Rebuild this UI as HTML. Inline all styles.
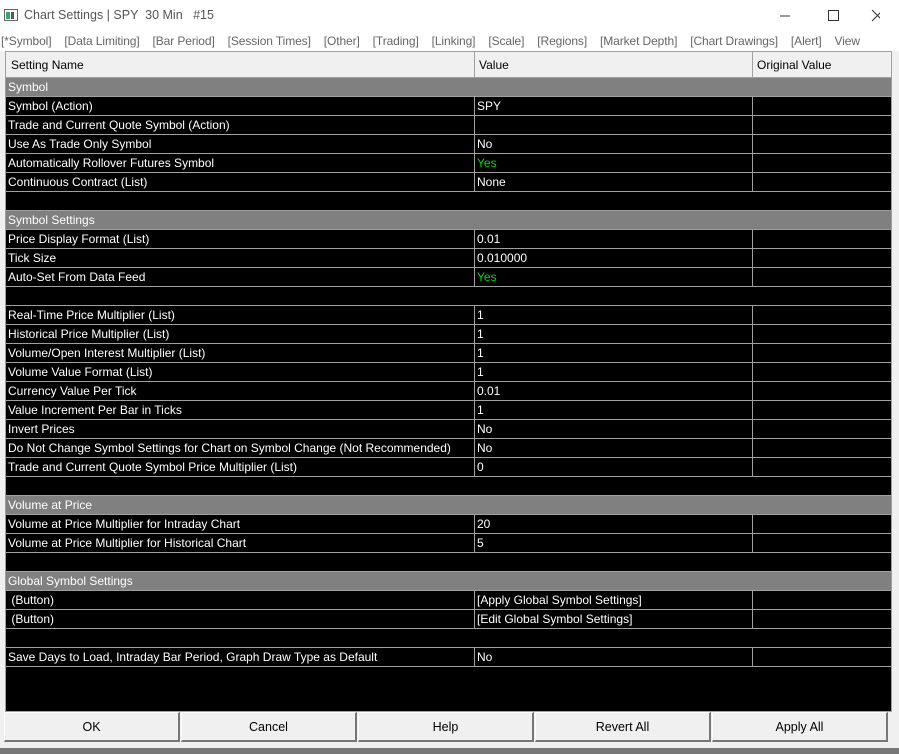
<!DOCTYPE html><html><head><style>
*{margin:0;padding:0;box-sizing:border-box}
body{width:899px;height:754px;overflow:hidden;background:#f0f0f0;font-family:"Liberation Sans",sans-serif;font-size:12px;position:relative}
.title{position:absolute;left:0;top:0;width:899px;height:31px;background:#fff;}
.title span{position:absolute;left:24px;top:8px;font-size:12.5px;color:#555;white-space:pre}
.menu{position:absolute;left:0;top:31px;width:899px;height:20px;background:#fff;color:#666;font-size:12px;white-space:pre;letter-spacing:-0.1px}
.tbl{position:absolute;left:5px;top:51px;width:887px;height:661px;background:#000;border:1px solid #a0a0a0}
.hdr{position:absolute;left:0;top:0;width:885px;height:26px;background:#f0f0f0;border-bottom:1px solid #a0a0a0;color:#000}
.hdr div{position:absolute;top:6px}
.r{position:absolute;left:0;width:885px;height:19px;color:#fff;border-bottom:1px solid #a0a0a0;line-height:18px}
.g{background:#808080}
.r .a{position:absolute;left:2px}
.r .b{position:absolute;left:468px;top:0;height:18px;border-left:1px solid #a0a0a0;padding-left:2px;width:278px}
.r .c{position:absolute;left:746px;top:0;height:18px;border-left:1px solid #a0a0a0}
.y{color:#0d0}
.btn{position:absolute;top:712px;height:30px;width:176px;background:#f0f0f0;border:1px solid #fff;border-right:2px solid #777;border-bottom:2px solid #777;text-align:center;line-height:28px;font-size:12.5px}
</style></head><body>
<div class="title"><svg style="position:absolute;left:4px;top:9px" width="14" height="12"><rect x="0.5" y="0.5" width="13" height="11" fill="#fff" stroke="#666"/><rect x="2" y="3" width="4" height="7" fill="#3a6"/><rect x="7" y="3" width="3" height="7" fill="#557"/></svg><span>Chart Settings | SPY  30 Min   #15</span>
<svg style="position:absolute;left:780px;top:9px" width="100" height="14"><line x1="0" y1="7" x2="10" y2="7" stroke="#333"/><rect x="48.5" y="1.5" width="10" height="10" fill="none" stroke="#333"/><path d="M92 1l11 11M103 1l-11 11" stroke="#333"/></svg></div>
<div class="menu"><span style="position:absolute;left:1px;top:3px">[*Symbol]    [Data Limiting]    [Bar Period]    [Session Times]    [Other]    [Trading]    [Linking]    [Scale]    [Regions]    [Market Depth]    [Chart Drawings]    [Alert]    View</span></div>
<div class="tbl">
<div class="hdr"><div style="left:5px">Setting Name</div><div style="left:468px;top:0;height:26px;border-left:1px solid #a0a0a0;padding:6px 0 0 4px">Value</div><div style="left:746px;top:0;height:26px;border-left:1px solid #a0a0a0;padding:6px 0 0 4px">Original Value</div></div>
<div class="r g" style="top:26px"><span class="a">Symbol</span></div>
<div class="r" style="top:45px"><span class="a">Symbol (Action)</span><span class="b">SPY</span><span class="c"></span></div>
<div class="r" style="top:64px"><span class="a">Trade and Current Quote Symbol (Action)</span><span class="b"></span><span class="c"></span></div>
<div class="r" style="top:83px"><span class="a">Use As Trade Only Symbol</span><span class="b">No</span><span class="c"></span></div>
<div class="r" style="top:102px"><span class="a">Automatically Rollover Futures Symbol</span><span class="b y">Yes</span><span class="c"></span></div>
<div class="r" style="top:121px"><span class="a">Continuous Contract (List)</span><span class="b">None</span><span class="c"></span></div>
<div class="r" style="top:140px"></div>
<div class="r g" style="top:159px"><span class="a">Symbol Settings</span></div>
<div class="r" style="top:178px"><span class="a">Price Display Format (List)</span><span class="b">0.01</span><span class="c"></span></div>
<div class="r" style="top:197px"><span class="a">Tick Size</span><span class="b">0.010000</span><span class="c"></span></div>
<div class="r" style="top:216px"><span class="a">Auto-Set From Data Feed</span><span class="b y">Yes</span><span class="c"></span></div>
<div class="r" style="top:235px"></div>
<div class="r" style="top:254px"><span class="a">Real-Time Price Multiplier (List)</span><span class="b">1</span><span class="c"></span></div>
<div class="r" style="top:273px"><span class="a">Historical Price Multiplier (List)</span><span class="b">1</span><span class="c"></span></div>
<div class="r" style="top:292px"><span class="a">Volume/Open Interest Multiplier (List)</span><span class="b">1</span><span class="c"></span></div>
<div class="r" style="top:311px"><span class="a">Volume Value Format (List)</span><span class="b">1</span><span class="c"></span></div>
<div class="r" style="top:330px"><span class="a">Currency Value Per Tick</span><span class="b">0.01</span><span class="c"></span></div>
<div class="r" style="top:349px"><span class="a">Value Increment Per Bar in Ticks</span><span class="b">1</span><span class="c"></span></div>
<div class="r" style="top:368px"><span class="a">Invert Prices</span><span class="b">No</span><span class="c"></span></div>
<div class="r" style="top:387px"><span class="a">Do Not Change Symbol Settings for Chart on Symbol Change (Not Recommended)</span><span class="b">No</span><span class="c"></span></div>
<div class="r" style="top:406px"><span class="a">Trade and Current Quote Symbol Price Multiplier (List)</span><span class="b">0</span><span class="c"></span></div>
<div class="r" style="top:425px"></div>
<div class="r g" style="top:444px"><span class="a">Volume at Price</span></div>
<div class="r" style="top:463px"><span class="a">Volume at Price Multiplier for Intraday Chart</span><span class="b">20</span><span class="c"></span></div>
<div class="r" style="top:482px"><span class="a">Volume at Price Multiplier for Historical Chart</span><span class="b">5</span><span class="c"></span></div>
<div class="r" style="top:501px"></div>
<div class="r g" style="top:520px"><span class="a">Global Symbol Settings</span></div>
<div class="r" style="top:539px"><span class="a">&nbsp;(Button)</span><span class="b">[Apply Global Symbol Settings]</span><span class="c"></span></div>
<div class="r" style="top:558px"><span class="a">&nbsp;(Button)</span><span class="b">[Edit Global Symbol Settings]</span><span class="c"></span></div>
<div class="r" style="top:577px"></div>
<div class="r" style="top:596px"><span class="a">Save Days to Load, Intraday Bar Period, Graph Draw Type as Default</span><span class="b">No</span><span class="c"></span></div>
</div>
<div class="btn" style="left:4px">OK</div>
<div class="btn" style="left:181px">Cancel</div>
<div class="btn" style="left:358px">Help</div>
<div class="btn" style="left:535px">Revert All</div>
<div class="btn" style="left:712px">Apply All</div>
<div style="position:absolute;left:0;top:748px;width:899px;height:6px;background:#777"></div>
</body></html>
